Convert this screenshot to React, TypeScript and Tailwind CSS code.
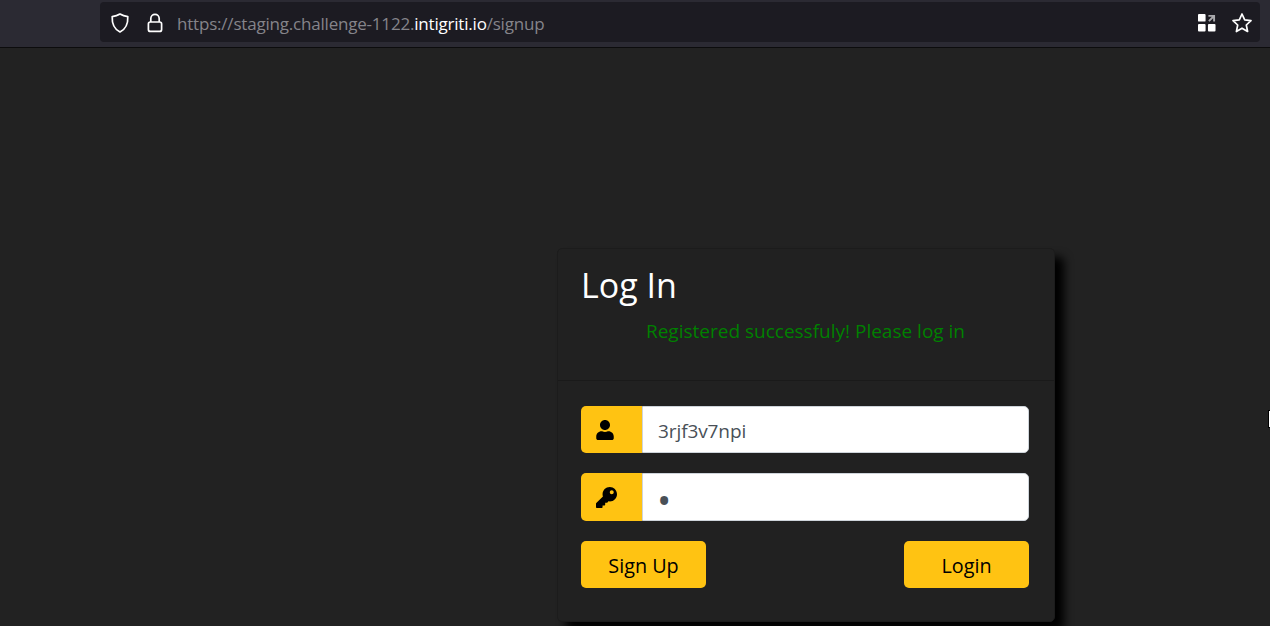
import { FaKey, FaUser } from "react-icons/fa";

const font = { fontFamily: '"Open Sans", "Noto Sans", sans-serif' };

function BrowserBar() {
  return (
    <div className="h-[48px] bg-[#2b2a33] border-b border-[#0c0c0d] pt-[2px] pl-[100px] pr-[10px]">
      <div className="h-[40px] bg-[#1c1b22] rounded-[4px] flex items-center pl-[10px] pr-[7px]">
        {/* Shield */}
        <svg width="20" height="22" viewBox="0 0 20 22" fill="none" stroke="white" strokeWidth="1.7" className="shrink-0 mt-[1px]">
          <path d="M10 2 C7.5 3.6 5 4.3 2.2 4.6 C1.9 11 3.6 16.8 10 20 C16.4 16.8 18.1 11 17.8 4.6 C15 4.3 12.5 3.6 10 2 Z" strokeLinejoin="round" />
        </svg>
        {/* Lock */}
        <svg width="18" height="22" viewBox="0 0 18 22" fill="none" stroke="white" strokeWidth="1.7" className="ml-[16px] shrink-0 mt-[1px]">
          <path d="M4.8 10 V6.5 a4.2 4.2 0 0 1 8.4 0 V10" />
          <rect x="2.4" y="10" width="13.2" height="9.4" rx="2" />
        </svg>
        <div className="ml-[13px] pt-[4px] text-[17px] tracking-[-0.2px] text-[#85848a]" style={font}>
          https://staging.challenge-1122.<span className="text-white">intigriti.io</span>/signup
        </div>
        <div className="ml-auto flex items-center gap-[15px] pt-[2px]">
          {/* Extensions */}
          <svg width="18" height="18" viewBox="0 0 19 19" fill="white">
            <rect x="0" y="0" width="8" height="8" rx="1" />
            <rect x="0" y="10.5" width="8" height="8" rx="1" />
            <rect x="10.5" y="10.5" width="8" height="8" rx="1" />
            <path d="M11 1 H18 V8 H16 V4.4 L12.2 8.2 L10.8 6.8 L14.6 3 H11 Z" fill="#a9a9ad" />
          </svg>
          {/* Star */}
          <svg width="22" height="22" viewBox="0 0 22 22" fill="none" stroke="white" strokeWidth="1.7" strokeLinejoin="round">
            <path d="M11 2 L13.7 7.9 L20 8.6 L15.3 13 L16.6 19.5 L11 16.2 L5.4 19.5 L6.7 13 L2 8.6 L8.3 7.9 Z" />
          </svg>
        </div>
      </div>
    </div>
  );
}

function InputRow({ icon, children, big }: { icon: React.ReactNode; children: React.ReactNode; big?: boolean }) {
  return (
    <div className={`flex w-full ${big ? "h-[48px]" : "h-[47px]"}`}>
      <div className="w-[61px] shrink-0 bg-[#ffc312] rounded-l-[5px] flex items-center pl-[15px] text-black">
        {icon}
      </div>
      <div className="flex-1 bg-white border border-[#ced4da] rounded-r-[5px] flex items-center pl-[15px] text-[#495057]" style={font}>
        {children}
      </div>
    </div>
  );
}

export default function App() {
  return (
    <div className="relative h-[626px] overflow-hidden bg-[#222222]" style={font}>
      <BrowserBar />
      <div className="pl-[557px] pt-[200px]">
        <div className="w-[498px] h-[374px] bg-[#212121] border border-[#1c1c1c] rounded-[5px] shadow-[9px_9px_10px_#000000]">
          <div className="h-[132px] border-b border-[#1a1a1a] pl-[23px] pr-[24px] pt-[11px]">
            <h3 className="text-[34px] leading-[50px] text-white">Log In</h3>
            <p className="mt-[8px] text-center text-[19px] leading-[27px] text-[#008000]">
              Registered successfuly! Please log in
            </p>
          </div>
          <div className="pl-[23px] pr-[25px] pt-[25px]">
            <InputRow icon={<FaUser className="w-[18px] h-[20px]" />}>
              <span className="pt-[3px] text-[19px] tracking-[-0.1px]">3rjf3v7npi</span>
            </InputRow>
            <div className="mt-[20px]">
              <InputRow icon={<FaKey className="w-[21px] h-[21px]" />} big>
                <span className="-ml-[1px] pt-[6px] text-[38px] leading-[38px]">•</span>
              </InputRow>
            </div>
            <div className="mt-[20px] flex justify-between">
              <button className="w-[125px] h-[47px] pt-[3px] bg-[#ffc312] rounded-[5px] text-black text-[19.8px]">Sign Up</button>
              <button className="w-[125px] h-[47px] pt-[3px] bg-[#ffc312] rounded-[5px] text-black text-[19.8px]">Login</button>
            </div>
          </div>
        </div>
      </div>
      {/* Mouse pointer cut off at the window edge */}
      <div className="absolute left-[1268px] top-[410px] w-[2px] h-[18px] bg-white border-l border-y border-black" />
    </div>
  );
}
